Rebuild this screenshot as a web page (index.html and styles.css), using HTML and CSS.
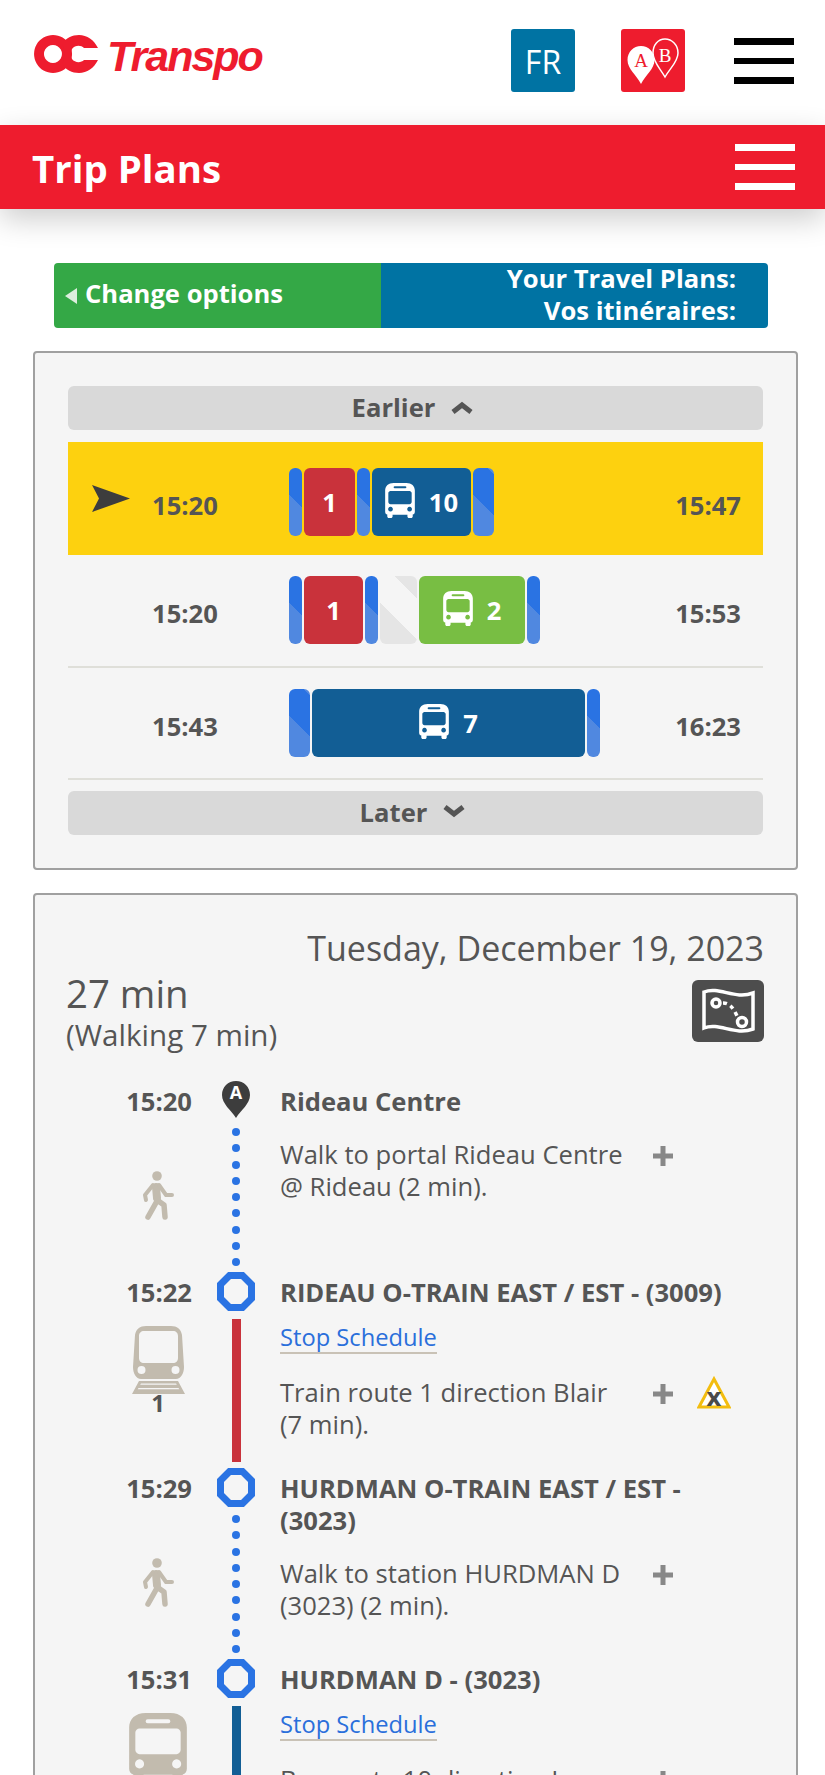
FILE: index.html
```html
<!DOCTYPE html>
<html lang="en">
<head>
  <meta charset="UTF-8">
  <title>Trip Plans</title>
  <meta name="viewport" content="width=device-width, initial-scale=1.0">
  <link rel="stylesheet" href="styles.css">
</head>
<body>

  <svg class="defs" width="0" height="0">
    <symbol id="bus" viewBox="0 0 28 33">
      <path fill-rule="evenodd" fill="currentColor" d="M8 0h12c5 0 8 3 8 7v20c0 1.500-.8 2.500-2 2.800V31.500c0 .8-.7 1.500-1.500 1.500h-2c-.8 0-1.500-.7-1.500-1.500V30H7v1.500C7 32.300 6.300 33 5.500 33h-2C2.700 33 2 32.300 2 31.500v-1.700C.8 29.500 0 28.500 0 27V7c0-4 3-7 8-7zM9 3a1 1 0 0 0 0 2h10a1 1 0 0 0 0-2zM5 7.500c-1 0-2 1-2 2V18c0 1 1 2 2 2h18c1 0 2-1 2-2V9.500c0-1-1-2-2-2zM5 22.500a2.200 2.200 0 1 0 .1 0zM23 22.500a2.200 2.200 0 1 0 .1 0z"/>
    </symbol>
    <symbol id="train" viewBox="0 0 53 68">
      <path fill-rule="evenodd" fill="currentColor" d="M14 0h25c6 0 10 3 11 9l2 32c0 6-3 12-8 12H9c-5 0-8-6-8-12l2-32C4 3 8 0 14 0zM12 5c-3 0-5 2-5 5v22c0 3 2 5 5 5h29c3 0 5-2 5-5V10c0-3-2-5-5-5zM5.500 44a4 4 0 1 0 8 0a4 4 0 1 0-8 0zM39.500 44a4 4 0 1 0 8 0a4 4 0 1 0-8 0z"/>
      <path fill="currentColor" fill-rule="evenodd" d="M7 55h39l7 13H0zM9 57.500l-.8 1.200h36.600l-.8-1.200zM6.500 62l-.8 1.200h41.600l-.8-1.200z"/>
    </symbol>
    <symbol id="walk" viewBox="0 0 32 50">
      <circle cx="15" cy="5" r="4.800" fill="currentColor"/>
      <path fill="none" stroke="currentColor" stroke-width="8" stroke-linecap="round" d="M14 16l1 11"/>
      <path fill="none" stroke="currentColor" stroke-width="5.500" stroke-linecap="round" stroke-linejoin="round" d="M14 27l1 3l-9 16M15 29l7 5l1 12"/>
      <path fill="none" stroke="currentColor" stroke-width="4" stroke-linecap="round" stroke-linejoin="round" d="M11 14l-8 10l1 5M17 14l7 10h6"/>
    </symbol>
    <symbol id="plus" viewBox="0 0 22 22">
      <path fill="currentColor" d="M8.500 1h5v7.500H21v5h-7.500V21h-5v-7.500H1v-5h7.500z"/>
    </symbol>
    <symbol id="octagon" viewBox="0 0 38 39">
      <path fill="none" stroke="currentColor" stroke-width="7" d="M12.500 3.500h13L34.500 12.500v14L25.500 35.500h-13L3.500 26.500v-14z"/>
    </symbol>
  </svg>

  <header class="topbar">
    <a class="logo">
      <svg class="logo-mark" viewBox="0 0 64 38" width="64" height="38">
        <path fill="#ee1c2e" fill-rule="evenodd" d="M19 0a19 19 0 1 0 .1 0zM19 10a9 9 0 1 1-.1 0z"/>
        <path fill="#ee1c2e" d="M45 0c8 0 15 5 19 13H50c-3-3-9-3-12 1c-2 3-2 7 0 10c3 4 9 4 12 1h14c-4 8-11 13-19 13c-7 0-13-3-17-9c3-6 3-14 0-20c4-6 10-9 17-9z"/>
      </svg>
      <span class="logo-text">Transpo</span>
    </a>
    <a class="square-btn lang">FR</a>
    <a class="square-btn planner">
      <svg viewBox="0 0 64 63" width="64" height="63">
        <path fill="#fff" d="M20 17c7.500 0 13.500 6 13.500 14c0 9-9 15-13.500 24c-4.500-9-13.500-15-13.500-24c0-8 6-14 13.500-14z"/>
        <path fill="#ee1c2e" stroke="#fff" stroke-width="1.500" d="M44 10c7 0 13 6 13 14c0 9-8 15-13 24c-5-9-12-15-12-24c0-8 5-14 12-14z"/>
        <text class="pin-a" x="20" y="38">A</text>
        <text class="pin-b" x="44" y="33">B</text>
      </svg>
    </a>
    <div class="burger"><span></span><span></span><span></span></div>
  </header>

  <div class="titlebar">
    <h1>Trip Plans</h1>
    <div class="burger white"><span></span><span></span><span></span></div>
  </div>

  <nav class="planbar">
    <a class="change"><i class="back"></i>Change options</a>
    <div class="plans-label">Your Travel Plans:<br>Vos itinéraires:</div>
  </nav>

  <section class="card options">
    <a class="more">Earlier
      <svg viewBox="0 0 22 14" width="22" height="14"><path fill="none" stroke="currentColor" stroke-width="5" d="M2 12l9-7l9 7"/></svg>
    </a>

    <div class="option selected">
      <div class="arrow">
        <svg viewBox="0 0 38 27" width="38" height="27"><path fill="#3d3d3d" d="M0 0l38 13.500L0 27l7-13.500z"/></svg>
      </div>
      <div class="time">15:20</div>
      <div class="segs">
        <div class="seg walk" style="width:13px"></div>
        <div class="seg rail" style="width:51px">1</div>
        <div class="seg walk" style="width:13px"></div>
        <div class="seg bus" style="width:99px"><svg class="seg-icon"><use href="#bus"/></svg>10</div>
        <div class="seg walk" style="width:21px"></div>
      </div>
      <div class="time end">15:47</div>
    </div>

    <div class="option">
      <div class="arrow"></div>
      <div class="time">15:20</div>
      <div class="segs">
        <div class="seg walk" style="width:13px"></div>
        <div class="seg rail" style="width:59px">1</div>
        <div class="seg walk" style="width:13px"></div>
        <div class="seg wait" style="width:37px"></div>
        <div class="seg local" style="width:106px"><svg class="seg-icon"><use href="#bus"/></svg>2</div>
        <div class="seg walk" style="width:13px"></div>
      </div>
      <div class="time end">15:53</div>
    </div>

    <div class="option last">
      <div class="arrow"></div>
      <div class="time">15:43</div>
      <div class="segs">
        <div class="seg walk" style="width:21px"></div>
        <div class="seg bus" style="width:273px"><svg class="seg-icon"><use href="#bus"/></svg>7</div>
        <div class="seg walk" style="width:13px"></div>
      </div>
      <div class="time end">16:23</div>
    </div>

    <a class="more later">Later
      <svg viewBox="0 0 22 14" width="22" height="14"><path fill="none" stroke="currentColor" stroke-width="5" d="M2 2l9 7l9-7"/></svg>
    </a>
  </section>

  <section class="card details">
    <div class="date">Tuesday, December 19, 2023</div>
    <div class="summary">
      <div>
        <div class="duration">27 min</div>
        <div class="walking">(Walking 7 min)</div>
      </div>
      <a class="map-btn">
        <svg viewBox="0 0 72 62" width="72" height="62">
          <path fill="none" stroke="#fff" stroke-width="3.500" d="M12 12c15-6 31 8 49 1v36c-18 7-34-7-49-1z"/>
          <circle cx="24" cy="23" r="4" fill="none" stroke="#fff" stroke-width="3.500"/>
          <circle cx="50" cy="42" r="4.500" fill="none" stroke="#fff" stroke-width="3.500"/>
          <path fill="none" stroke="#fff" stroke-width="3.500" stroke-dasharray="4 4" d="M31 23c6 0 10 4 14 13"/>
        </svg>
      </a>
    </div>

    <div class="stop">
      <div class="when">
        <div class="stop-time">15:20</div>
        <div class="mode walk-mode"><svg class="walk-icon"><use href="#walk"/></svg></div>
      </div>
      <div class="track">
        <svg class="pin" viewBox="0 0 28 37" width="28" height="37">
          <path fill="#3d3d3d" d="M14 0c8 0 14 6 14 14c0 9-9 15-14 23C9 29 0 23 0 14C0 6 6 0 14 0z"/>
          <text class="pin-label" x="14" y="18">A</text>
        </svg>
        <div class="dots"><i></i><i></i><i></i><i></i><i></i><i></i><i></i><i></i><i></i></div>
      </div>
      <div class="info">
        <div class="place">Rideau Centre</div>
        <div class="leg leg-walk">
          <p>Walk to portal Rideau Centre @ Rideau (2 min).</p>
          <svg class="plus"><use href="#plus"/></svg>
        </div>
      </div>
    </div>

    <div class="stop">
      <div class="when">
        <div class="stop-time">15:22</div>
        <div class="mode"><svg class="train-icon"><use href="#train"/></svg><div class="route-no">1</div></div>
      </div>
      <div class="track">
        <svg class="octagon"><use href="#octagon"/></svg>
        <div class="line red-line"></div>
      </div>
      <div class="info">
        <div class="place">RIDEAU O-TRAIN EAST / EST - (3009)</div>
        <a class="schedule">Stop Schedule</a>
        <div class="leg">
          <p>Train route 1 direction Blair (7 min).</p>
          <svg class="plus"><use href="#plus"/></svg>
          <svg class="alert" viewBox="0 0 34 38" width="34" height="38">
            <path fill="#fff" stroke="#f3bd0f" stroke-width="3" d="M17 3l15 28H2z"/>
            <text class="alert-x" x="17" y="30">x</text>
          </svg>
        </div>
      </div>
    </div>

    <div class="stop">
      <div class="when">
        <div class="stop-time">15:29</div>
        <div class="mode walk-mode"><svg class="walk-icon"><use href="#walk"/></svg></div>
      </div>
      <div class="track">
        <svg class="octagon"><use href="#octagon"/></svg>
        <div class="dots after-node"><i></i><i></i><i></i><i></i><i></i><i></i><i></i><i></i><i></i></div>
      </div>
      <div class="info">
        <div class="place">HURDMAN O-TRAIN EAST / EST - (3023)</div>
        <div class="leg leg-walk">
          <p>Walk to station HURDMAN D (3023) (2 min).</p>
          <svg class="plus"><use href="#plus"/></svg>
        </div>
      </div>
    </div>

    <div class="stop">
      <div class="when">
        <div class="stop-time">15:31</div>
        <div class="mode"><svg class="big-bus"><use href="#bus"/></svg></div>
      </div>
      <div class="track">
        <svg class="octagon"><use href="#octagon"/></svg>
        <div class="line blue-line"></div>
      </div>
      <div class="info">
        <div class="place">HURDMAN D - (3023)</div>
        <a class="schedule">Stop Schedule</a>
        <div class="leg">
          <p>Bus route 10 direction Lyon (12 min).</p>
          <svg class="plus"><use href="#plus"/></svg>
        </div>
      </div>
    </div>
  </section>

</body>
</html>
```

FILE: styles.css
```css
html, body {
  height: 1775px;
  overflow: hidden;
}
body {
  margin: 0;
  background: #fff;
  font-family: "Open Sans", Arial, sans-serif;
  font-size: 25.6px;
  color: #555;
}
.defs {
  position: absolute;
}
p {
  margin: 0;
}

/* top */
.topbar {
  display: flex;
  align-items: flex-start;
  height: 125px;
  box-sizing: border-box;
  padding: 29px 30px 0 34px;
}
.logo {
  display: flex;
  align-items: flex-start;
  width: 477px;
  margin-top: 6px;
}
.logo-mark {
  flex: none;
}
.logo-text {
  margin: -5px 0 0 9px;
  font-family: "Liberation Sans", Arial, sans-serif;
  font-style: italic;
  font-weight: bold;
  font-size: 43px;
  line-height: 52px;
  letter-spacing: -2px;
  color: #ee1c2e;
}
.square-btn {
  display: block;
  width: 64px;
  height: 63px;
  border-radius: 3px;
}
.lang {
  background: #0073a3;
  color: #fff;
  font-size: 32px;
  line-height: 65px;
  text-align: center;
}
.planner {
  margin-left: 46px;
  background: #ee1c2e;
}
.pin-a, .pin-b {
  font-family: "Liberation Serif", serif;
  font-size: 19px;
  text-anchor: middle;
}
.pin-a {
  fill: #ee1c2e;
}
.pin-b {
  fill: #fff;
}
.burger {
  width: 60px;
  margin: 9px 0 0 49px;
}
.burger span {
  display: block;
  height: 6.500px;
  margin-bottom: 13px;
  background: #000;
}
.burger.white {
  margin: 0;
}
.burger.white span {
  background: #fff;
}

.titlebar {
  position: relative;
  display: flex;
  justify-content: space-between;
  height: 84px;
  box-sizing: border-box;
  padding: 19px 30px 0 32px;
  background: #ee1c2e;
  box-shadow: 0 10px 30px rgba(0, 0, 0, 0.2);
}
.titlebar h1 {
  margin: 0;
  font-size: 38.400px;
  line-height: 48px;
  color: #fff;
}

.planbar {
  display: flex;
  height: 65px;
  margin: 54px 57px 0 54px;
  font-weight: bold;
  line-height: 32px;
  color: #fff;
}
.change {
  display: flex;
  align-items: center;
  width: 327px;
  padding-bottom: 4px;
  box-sizing: border-box;
  border-radius: 4px 0 0 4px;
  background: #34a846;
}
.back {
  width: 0;
  height: 0;
  margin: 4px 8px 0 11px;
  border-top: 8px solid transparent;
  border-bottom: 8px solid transparent;
  border-right: 12px solid #dceedd;
}
.plans-label {
  flex: 1;
  padding-right: 32px;
  border-radius: 0 4px 4px 0;
  background: #0073a3;
  text-align: right;
}

/* cards */
.card {
  box-sizing: border-box;
  width: 765px;
  margin-left: 33px;
  border: 2px solid #a0a0a0;
  border-radius: 4px;
  background: #f5f5f5;
}
.options {
  height: 519px;
  margin-top: 23px;
  padding: 33px;
}
.more {
  display: flex;
  justify-content: center;
  align-items: center;
  gap: 16px;
  height: 44px;
  padding: 0 6px 2px 0;
  box-sizing: border-box;
  border-radius: 6px;
  background: #d9d9d9;
  font-weight: bold;
}
.later {
  margin-top: 11px;
}
.option {
  display: grid;
  grid-template-columns: 84px 137px 1fr auto;
  align-items: start;
  height: 113px;
  box-sizing: border-box;
  padding: 21px 22px 0 0;
  border-bottom: 2px solid #dfdfd9;
}
.option.selected {
  margin-top: 12px;
  padding-top: 26px;
  background: #fdd10f;
  border-bottom: 0;
}
.option.last {
  height: 112px;
}
.arrow {
  padding: 17px 0 0 24px;
  line-height: 0;
}
.time {
  padding-top: 21px;
  font-weight: bold;
  line-height: 34px;
}
.segs {
  display: flex;
  gap: 2px;
}
.seg {
  display: flex;
  justify-content: center;
  align-items: center;
  gap: 14px;
  height: 68px;
  border-radius: 6px;
  font-weight: bold;
  color: #fff;
}
.seg-icon {
  width: 30px;
  height: 35px;
  margin-top: -4px;
}
.walk {
  background: repeating-linear-gradient(45deg, #5088e0 0 29px, #2a73e3 29px 58px);
}
.wait {
  background: repeating-linear-gradient(45deg, #e5e5e5 0 29px, #f5f5f5 29px 58px);
}
.rail {
  background: #c9323b;
}
.bus {
  background: #125e95;
}
.local {
  background: #78be43;
}

.details {
  height: 900px;
  margin-top: 23px;
  padding: 31px 32px 0 31px;
}
.date {
  font-size: 34px;
  line-height: 44px;
  text-align: right;
}
.summary {
  display: flex;
  justify-content: space-between;
  margin: -2px 0 29px;
}
.duration {
  font-size: 38.400px;
  line-height: 50px;
}
.walking {
  font-size: 29.600px;
  line-height: 34px;
}
.map-btn {
  display: block;
  height: 62px;
  margin-top: 12px;
  border-radius: 6px;
  background: #4d4d4d;
  line-height: 0;
}

/* timeline */
.stop {
  display: grid;
  grid-template-columns: 126px 88px 1fr;
}
.stop-time {
  padding-top: 5px;
  font-weight: bold;
  line-height: 32px;
  text-align: right;
}
.mode {
  width: 58px;
  margin: 17px 0 0 63px;
  color: #c2bbae;
  line-height: 0;
  text-align: center;
}
.walk-mode {
  margin-top: 53px;
}
.walk-icon {
  width: 32px;
  height: 50px;
}
.train-icon {
  width: 53px;
  height: 68px;
}
.big-bus {
  width: 58px;
  height: 68px;
}
.route-no {
  margin-top: -1px;
  font-weight: bold;
  font-size: 24px;
  line-height: 20px;
  color: #555;
}
.track {
  display: flex;
  flex-direction: column;
  align-items: center;
  color: #2a73e3;
}
.pin {
  flex: none;
}
.pin-label {
  font-weight: bold;
  font-size: 18px;
  fill: #fff;
  text-anchor: middle;
}
.octagon {
  flex: none;
  width: 38px;
  height: 39px;
}
.dots {
  display: flex;
  flex-direction: column;
  gap: 8.250px;
  margin: 10px 0 6px;
}
.dots.after-node {
  margin-top: 8px;
}
.dots i {
  width: 8px;
  height: 8px;
  border-radius: 50%;
  background: #2a73e3;
}
.line {
  width: 9px;
  margin: 8px 0 6px;
}
.red-line {
  height: 143px;
  background: #c9323b;
}
.blue-line {
  height: 200px;
  background: #125e95;
}
.place {
  max-width: 450px;
  padding-top: 5px;
  font-weight: bold;
  line-height: 32px;
}
.schedule {
  display: inline-block;
  margin-top: 13px;
  border-bottom: 2px solid #c9c2b6;
  font-size: 23.700px;
  line-height: 30px;
  color: #2a6fdb;
}
.leg {
  display: flex;
  align-items: flex-start;
  margin-top: 23px;
  line-height: 32px;
}
.leg-walk {
  margin-top: 21px;
}
.leg p {
  flex: none;
  width: 348px;
}
.plus {
  flex: none;
  width: 22px;
  height: 22px;
  margin: 6px 0 0 24px;
  color: #888;
}
.alert {
  flex: none;
  margin: -1px 0 0 23px;
}
.alert-x {
  font-weight: bold;
  font-size: 25.600px;
  fill: #4a4a4a;
  text-anchor: middle;
}
```
